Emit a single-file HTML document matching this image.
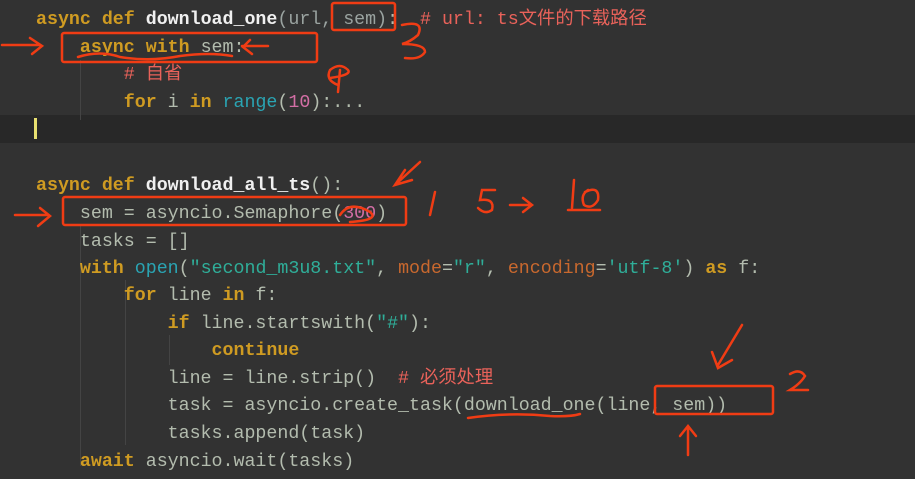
<!DOCTYPE html>
<html><head><meta charset="utf-8"><style>
body{margin:0;width:915px;height:479px;overflow:hidden;background:#323232;font-family:"Liberation Mono","Noto Sans CJK SC",monospace;font-size:18.3px;}
.cur{position:absolute;left:0;top:115px;width:915px;height:28px;background:#282828}
.l{position:absolute;left:36px;white-space:pre;color:#b3bcae;line-height:27px;height:27px}
.k{color:#cf9b22;font-weight:bold}
.f{color:#f0f0f0;font-weight:bold}
.p{color:#9aa3a0}
.c{color:#e9625a}
.s{color:#2fae99}
.b{color:#2aa4b3}
.n{color:#d36ea5}
.m{color:#c8682e}
.g{position:absolute;width:1px;background:#444}
svg{position:absolute;left:0;top:0}
</style></head><body>
<div class="cur"></div>
<div class="g" style="left:80px;top:60px;height:60px"></div>
<div class="g" style="left:80px;top:226px;height:240px"></div>
<div class="g" style="left:125px;top:280px;height:165px"></div>
<div class="g" style="left:169px;top:335px;height:30px"></div>
<div style="position:absolute;left:34px;top:118px;width:3px;height:21px;background:#e8e070"></div>
<div class="l" style="top:7px"><span class="k">async def </span><span class="f">download_one</span><span class="p">(url, sem)</span>:  <span class="c"># url: ts文件的下载路径</span></div>
<div class="l" style="top:35px">    <span class="k">async with </span>sem:</div>
<div class="l" style="top:62px">        <span class="c"># 自省</span></div>
<div class="l" style="top:90px">        <span class="k">for </span>i <span class="k">in </span><span class="b">range</span>(<span class="n">10</span>):...</div>
<div class="l" style="top:173px"><span class="k">async def </span><span class="f">download_all_ts</span>():</div>
<div class="l" style="top:201px">    sem = asyncio.Semaphore(<span class="n">300</span>)</div>
<div class="l" style="top:229px">    tasks = []</div>
<div class="l" style="top:256px">    <span class="k">with </span><span class="b">open</span>(<span class="s">"second_m3u8.txt"</span>, <span class="m">mode</span>=<span class="s">"r"</span>, <span class="m">encoding</span>=<span class="s">'utf-8'</span>) <span class="k">as </span>f:</div>
<div class="l" style="top:283px">        <span class="k">for </span>line <span class="k">in </span>f:</div>
<div class="l" style="top:311px">            <span class="k">if </span>line.startswith(<span class="s">"#"</span>):</div>
<div class="l" style="top:338px">                <span class="k">continue</span></div>
<div class="l" style="top:366px">            line = line.strip()  <span class="c"># 必须处理</span></div>
<div class="l" style="top:393px">            task = asyncio.create_task(download_one(line, sem))</div>
<div class="l" style="top:421px">            tasks.append(task)</div>
<div class="l" style="top:449px">    <span class="k">await </span>asyncio.wait(tasks)</div>
<svg width="915" height="479" fill="none" stroke="#f03c14" stroke-width="2.5" stroke-linecap="round">
<rect x="332" y="3" width="63" height="27" rx="2"/>
<rect x="62" y="33" width="255" height="29" rx="2"/>
<rect x="63" y="197" width="343" height="28" rx="2"/>
<rect x="655" y="386" width="118" height="28" rx="2"/>
<path d="M2 45 H40 M30 38 L42 46 L32 54"/>
<path d="M15 215 H48 M40 208 L50 216 L38 226"/>
<path d="M268 46 H242 M250 40 L243 47 L252 54"/>
<path d="M78 57 Q100 50 120 57 Q150 62 180 56 Q210 52 232 56"/>
<path d="M402 25 Q425 20 418 35 Q410 42 402 44 Q425 44 425 52 Q420 60 405 58"/>
<path d="M338 85 Q325 80 330 70 Q340 62 348 70 Q352 75 330 78 M340 70 L338 92"/>
<path d="M405 170 L395 185 L412 180 M395 185 L420 162"/>
<path d="M340 215 Q350 200 370 212 Q380 220 350 222"/>
<path d="M435 192 L430 215"/>
<path d="M495 190 H482 L480 200 Q495 198 492 210 Q485 215 478 208"/>
<path d="M510 205 H530 M523 198 L532 205 L523 212"/>
<path d="M574 180 L572 208 M585 192 Q600 185 598 200 Q592 210 584 205 Q580 195 588 190 M568 210 H600"/>
<path d="M742 325 L718 365 M712 352 L718 368 L732 360"/>
<path d="M790 374 Q800 368 805 376 Q800 384 790 390 H808"/>
<path d="M688 455 V428 M680 436 L688 426 L696 436"/>
<path d="M468 418 Q510 412 550 416 Q570 417 580 414"/>
</svg>
</body></html>
